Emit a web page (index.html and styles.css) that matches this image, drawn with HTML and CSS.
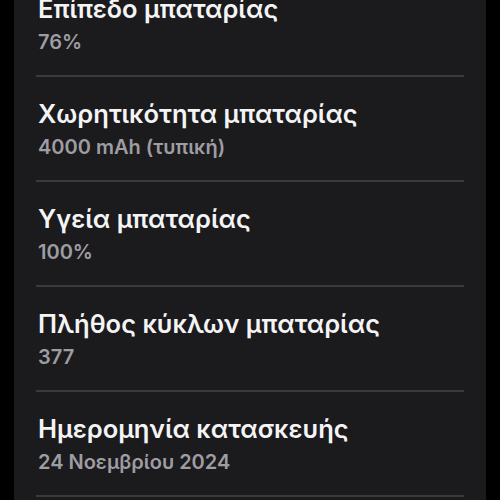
FILE: index.html
```html
<!DOCTYPE html>
<html lang="el">
<head>
<meta charset="utf-8">
<link rel="stylesheet" href="styles.css">
</head>
<body>
<div class="panel">
  <ul class="list">
    <li class="row"><div class="title">Επίπεδο μπαταρίας</div><div class="value">76%</div></li>
    <li class="row"><div class="title">Χωρητικότητα μπαταρίας</div><div class="value">4000 mAh (τυπική)</div></li>
    <li class="row"><div class="title">Υγεία μπαταρίας</div><div class="value">100%</div></li>
    <li class="row"><div class="title">Πλήθος κύκλων μπαταρίας</div><div class="value">377</div></li>
    <li class="row"><div class="title">Ημερομηνία κατασκευής</div><div class="value">24 Νοεμβρίου 2024</div></li>
  </ul>
</div>
</body>
</html>
```
FILE: styles.css
```css
html, body {
  margin: 0;
  padding: 0;
  background: #000;
  height: 500px;
  overflow: hidden;
}
.panel {
  margin: 0 14px;
  height: 500px;
  background: #1b1a1d;
  padding: 0 22px;
  box-sizing: border-box;
  overflow: hidden;
  font-family: Inter, "Noto Sans", sans-serif;
}
.list {
  list-style: none;
  margin: -28px 0 0;
  padding: 0;
}
.row {
  padding: 22px 0 21px 2px;
  border-bottom: 2px solid #3a393d;
}
.title {
  font-size: 25.5px;
  line-height: 30px;
  font-weight: 600;
  color: #f4f4f5;
}
.value {
  margin-top: 6px;
  font-size: 20px;
  line-height: 24px;
  font-weight: 600;
  color: #9e9da2;
}
```
